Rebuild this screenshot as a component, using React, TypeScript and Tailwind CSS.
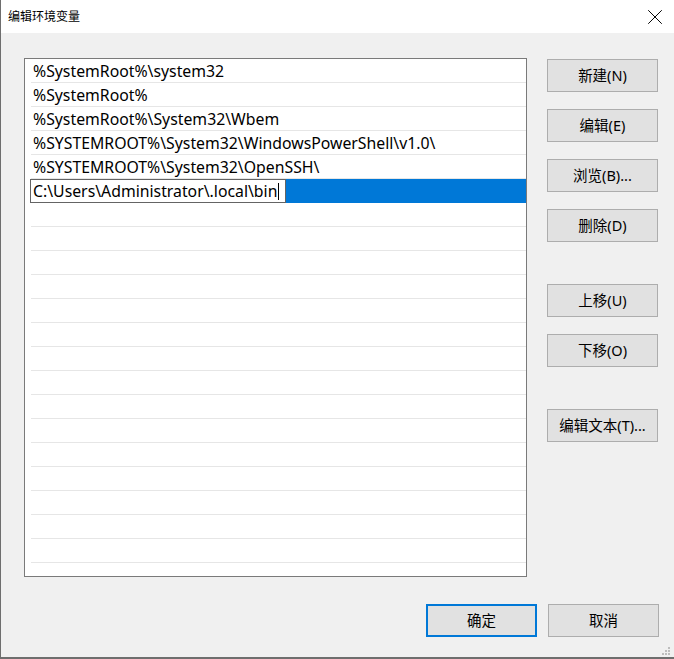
import { X } from "lucide-react";

const paths = [
  "%SystemRoot%\\system32",
  "%SystemRoot%",
  "%SystemRoot%\\System32\\Wbem",
  "%SYSTEMROOT%\\System32\\WindowsPowerShell\\v1.0\\",
  "%SYSTEMROOT%\\System32\\OpenSSH\\",
];

const editing = "C:\\Users\\Administrator\\.local\\bin";

// empty rows below the entries, so the ruled lines fill the box
const blankRows = 16;

const font = { fontFamily: '"Noto Sans", "Noto Sans CJK SC", sans-serif' };

function Btn({ label, primary = false }: { label: string; primary?: boolean }) {
  return (
    <button
      className={`flex h-[33px] w-[111px] items-center justify-center bg-[#e1e1e1] text-[14.5px] text-black ${
        primary ? "border-2 border-[#0078d7]" : "border border-[#adadad]"
      }`}
    >
      {label}
    </button>
  );
}

function Row({ text }: { text: string }) {
  return (
    <div className="flex h-[24px] shrink-0 flex-col">
      <div className="flex flex-1 items-center pl-[8px] pt-[2px] text-[15.8px] leading-none text-black">{text}</div>
      <div className="ml-[6px] h-px bg-[#e6e6e6]" />
    </div>
  );
}

function ResizeGrip() {
  const dots = [
    [6, 0],
    [3, 3],
    [6, 3],
    [0, 6],
    [3, 6],
    [6, 6],
  ];
  return (
    <svg width="9" height="9" viewBox="0 0 9 9">
      {dots.map(([x, y]) => (
        <rect key={`${x}-${y}`} x={x} y={y} width="2" height="2" fill="#bdbdbd" />
      ))}
    </svg>
  );
}

export default function App() {
  return (
    <div
      className="flex h-[659px] w-[674px] flex-col overflow-hidden border-b-2 border-l border-[#6e6e6e] bg-[#f0f0f0]"
      style={font}
    >
      {/* title bar */}
      <div className="flex h-[33px] shrink-0 items-center justify-between bg-white pl-[7px] pr-[6px]">
        <span className="text-[12px] text-black">编辑环境变量</span>
        <X size={26} strokeWidth={0.9} className="text-black" />
      </div>

      <div className="flex pl-[23px] pt-[25px]">
        {/* path list */}
        <div className="flex h-[519px] w-[503px] flex-col overflow-hidden border border-[#7a7a7a] bg-white">
          {paths.map((p) => (
            <Row key={p} text={p} />
          ))}
          <div className="flex h-[24px] shrink-0">
            <div className="w-[5px] bg-white" />
            <div className="flex w-[256px] items-center border border-[#646464] bg-white pl-[2px] pt-[1px] text-[15.8px] leading-none text-black">
              {editing}
              <span className="ml-px inline-block h-[17px] w-px bg-black" />
            </div>
            <div className="flex-1 bg-[#0078d7]" />
          </div>
          {Array.from({ length: blankRows }, (_, i) => (
            <Row key={i} text="" />
          ))}
        </div>

        {/* side buttons */}
        <div className="ml-[20px] flex flex-col pt-[1px]">
          <div className="flex flex-col gap-[17px]">
            <Btn label="新建(N)" />
            <Btn label="编辑(E)" />
            <Btn label="浏览(B)..." />
            <Btn label="删除(D)" />
          </div>
          <div className="mt-[42px] flex flex-col gap-[17px]">
            <Btn label="上移(U)" />
            <Btn label="下移(O)" />
          </div>
          <div className="mt-[42px]">
            <Btn label="编辑文本(T)..." />
          </div>
        </div>
      </div>

      {/* footer */}
      <div className="flex flex-1 flex-col">
        <div className="mt-[27px] flex justify-end gap-[11px] pr-[15px]">
          <Btn label="确定" primary />
          <Btn label="取消" />
        </div>
        <div className="mt-auto flex justify-end pb-[1px] pr-[3px]">
          <ResizeGrip />
        </div>
      </div>
    </div>
  );
}
